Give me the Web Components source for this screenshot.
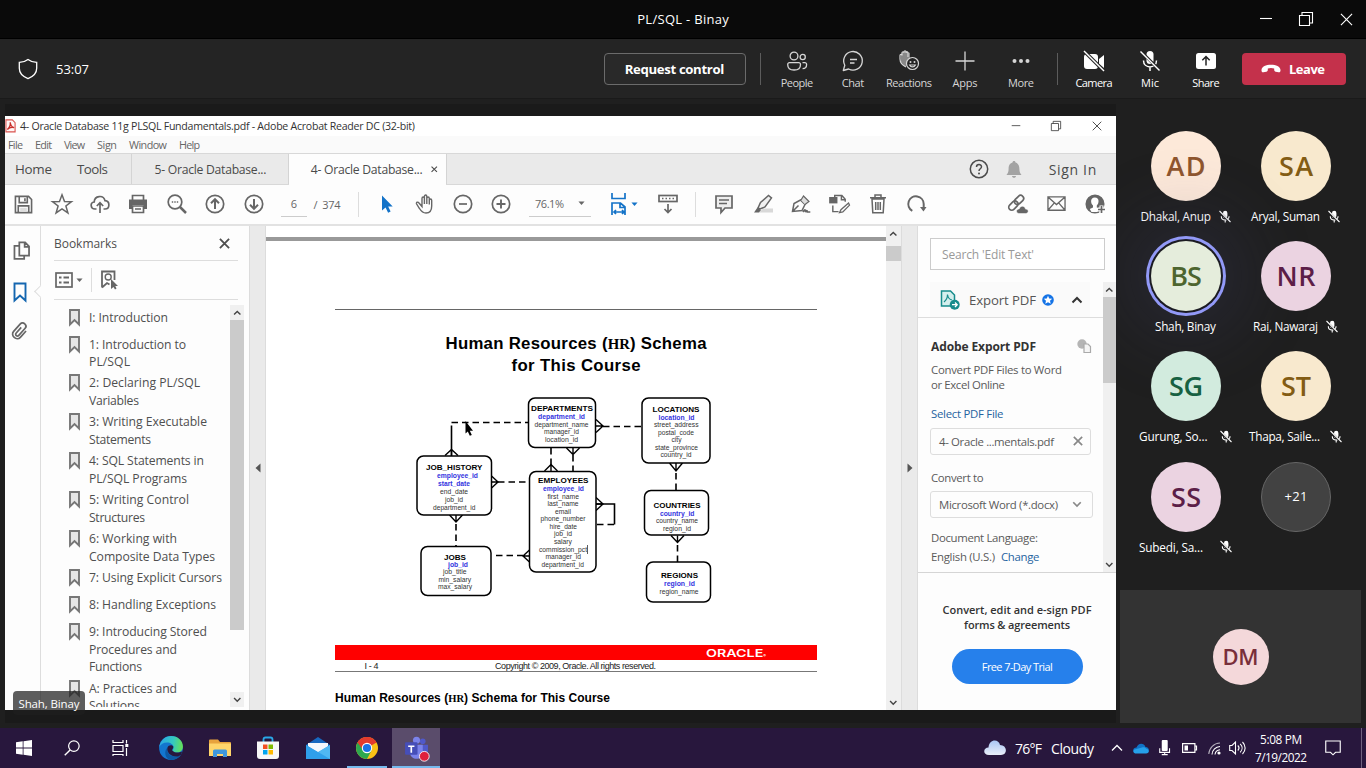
<!DOCTYPE html>
<html lang="en">
<head>
<meta charset="utf-8">
<title>PL/SQL - Binay</title>
<style>
html,body{margin:0;height:100%;overflow:hidden;background:#1f1f1f}
body{font-family:"Open Sans","Noto Sans",sans-serif}
</style>
</head>
<body>
<meeting-app></meeting-app>
<script>
/* ---------- icons: [viewBox width, height, markup] ---------- */
const ICONS = {
  min:[14,14,'<path d="M1 6.500h12" stroke-width="1.100"/>'],
  restore:[14,14,'<path d="M.5 3.500h10v10h-10zM3 3.500V.5h10.500v10.500H11" stroke-width="1.100"/>'],
  close:[14,14,'<path d="M1 1l12 12M13 1L1 13" stroke-width="1.200"/>'],
  shield:[20,22,'<path d="M10 1.500C7.500 3.500 4.500 4.200 1.300 4.300v6c0 5 3.500 8.300 8.700 10.300 5.200-2 8.700-5.300 8.700-10.300v-6C15.500 4.200 12.500 3.500 10 1.500z" stroke-width="1.300"/>'],
  people:[22,22,'<g stroke-width="1.300"><circle cx="8" cy="6" r="3.900"/><circle cx="16.700" cy="7" r="2.600"/><path d="M3.500 12.600h9.200a1.800 1.800 0 0 1 1.800 1.800c0 3.700-2.500 5.600-6.400 5.600S1.700 18 1.700 14.400a1.800 1.800 0 0 1 1.800-1.800zM16.500 12.600h2.300a1.800 1.800 0 0 1 1.800 1.800c0 2.700-1.500 4.200-4 4.300"/></g>'],
  chat:[22,22,'<g stroke-width="1.300"><path d="M1.300 20.500l1.500-5.300A9.300 9.300 0 1 1 6.600 19z" stroke-linejoin="round"/><path d="M8 9.500h7M8 13h4.500"/></g>'],
  react:[22,22,'<path d="M3 4v8l4 5 4-3 3-4-2-1V3l-2-1-1-1-2 1-2 1z" fill="#888" stroke="none"/><g stroke-width="1.200"><path d="M8 17C4 15 2 12 2 9V5.500c0-1.500 2-1.500 2 0V3c0-1.500 2-1.500 2 0V2c0-1.500 2-1.500 2 0v1c0-1.500 2-1.500 2 0v4"/><circle cx="14.500" cy="13.500" r="6" fill="#242424"/><path d="M11.600 15c1.200 2.600 4.600 2.600 5.800 0z"/></g><circle cx="12.500" cy="12" r="1" fill="currentColor" stroke="none"/><circle cx="16.500" cy="12" r="1" fill="currentColor" stroke="none"/>'],
  plus:[22,22,'<path d="M11 1.500v19M1.500 11h19" stroke-width="1.300"/>'],
  more:[22,22,'<g fill="currentColor" stroke="none"><circle cx="4.500" cy="11" r="2"/><circle cx="11" cy="11" r="2"/><circle cx="17.500" cy="11" r="2"/></g>'],
  camera:[22,22,'<g fill="currentColor" stroke="none"><rect x="1" y="4" width="14" height="15" rx="3"/><path d="M16 9l5-4v13l-5-4z"/></g><path d="M2 2l19 19" stroke="#242424" stroke-width="3.500"/><path d="M1 1l20 20" stroke-width="1.500"/>'],
  mic:[22,22,'<rect x="7.500" y="1" width="7" height="13" rx="3.500" fill="currentColor" stroke="none"/><path d="M4.500 10.500c0 8.500 13 8.500 13 0M11 17v4" stroke-width="1.500"/><path d="M3 2.500l17 17" stroke="#242424" stroke-width="3"/><path d="M1.500 1.500l19 19" stroke-width="1.500"/>'],
  share:[22,22,'<rect x="1" y="3" width="20" height="16" rx="2.500" fill="currentColor" stroke="none"/><path d="M11 15.500V7M7.300 10.300L11 6.600l3.700 3.700" stroke="#242424" stroke-width="1.500"/>'],
  hang:[20,10,'<path d="M10 .8c5 0 9.300 1.800 9.500 5.200.1 1.600-.5 2.600-2 2.300l-2.800-.6c-1-.2-1.500-.9-1.500-2V4.600a10 10 0 0 0-6.400 0v1.100c0 1.100-.5 1.800-1.500 2l-2.800.6C1 8.600.4 7.600.5 6 .7 2.600 5 .8 10 .8z" fill="currentColor" stroke="none"/>'],
  pdf:[12,15,'<path d="M1 1h7l3 3v10H1z" stroke="#d9534f" stroke-width="1.200" fill="#fff6f5"/><path d="M2.500 11.500C5 9.500 6 6 5.700 3.500 6 7 8 9 10 9.500 7.500 8.700 4.500 9.500 2.500 11.500z" stroke="#c9302c" stroke-width="1.400"/>'],
  help:[20,20,'<circle cx="10" cy="10" r="8.700" stroke-width="1.500"/><path d="M7.500 8c0-3.200 5-3.200 5-.2 0 2-2.500 2-2.500 4.200" stroke-width="1.500"/><circle cx="10" cy="14.500" r="1" fill="currentColor" stroke="none"/>'],
  bell:[16,19,'<path d="M8 1c1 0 1.500.6 1.500 1.500C12.500 3.300 13.400 6 13.400 9c0 3 .8 4.500 2.100 6H.5C1.800 13.500 2.600 12 2.600 9c0-3 .9-5.700 3.900-6.500C6.500 1.600 7 1 8 1zM6 16h4c0 2.400-4 2.400-4 0z" fill="#a3a3a3" stroke="none"/>'],
  save:[20,20,'<path d="M1.500 1.500h13.800l3.200 3.200v13.800h-17z"/><path d="M5.500 2v6h8.500V2M4.500 18v-6.500h11V18"/><path d="M11.500 3.500v3"/><path d="M6.500 13.500h7v4h-7z" fill="#ddd" stroke="none"/>'],
  star:[22,22,'<path d="M11 1.800l2.500 6.700 7 .2-5.600 4.300 2 6.900L11 15.800 5.100 19.900l2-6.900L1.500 8.700l7-.2z" stroke-width="1.500"/>'],
  upcloud:[20,20,'<path d="M6.500 15H5C.3 15-.2 8.600 4.200 8 4.500 1.400 13.500.6 15 6.600c5.300.4 5 8.400 0 8.400h-1.500M10 19V9M6.800 12l3.200-3.300L13.200 12"/>'],
  print:[20,20,'<path d="M4.500 6V1.500h11V6M4.500 12h11v6.500h-11zM7 15h6"/><path d="M1 5.500h18V15h-3.500v-4h-11v4H1z" fill="currentColor" stroke="none"/>'],
  search:[20,20,'<circle cx="8" cy="8" r="6.800"/><path d="M13 13l6 6" stroke-width="2.500"/><path d="M4.800 8h1.400M7.300 8h1.400M9.800 8h1.400"/>'],
  up:[20,20,'<circle cx="10" cy="10" r="8.700"/><path d="M10 15V5.500M6 9.200l4-4 4 4" stroke-width="2"/>'],
  down:[20,20,'<circle cx="10" cy="10" r="8.700"/><path d="M10 5v9.500M6 10.800l4 4 4-4" stroke-width="2"/>'],
  cursor:[12,18,'<path d="M1 .5v15l3.600-3 2.500 5.300 2.500-1.200L7.200 11.500H11.700z" fill="#1473c8" stroke="none"/>'],
  hand:[20,20,'<path d="M7 11V4.500c0-2 2.400-2 2.400 0V2.500c0-2 2.400-2 2.400 0v2c0-2 2.500-2 2.500 0v2c0-2 2.400-2 2.400 0V12c0 4-2 7-5.700 7-3.500 0-4.700-1.500-6.500-4.500L1.500 9.800C1 8 3 7.600 4 9l3 3.500V4.500M9.400 4v6M11.800 4v6M14.300 6v4.500" stroke-width="1.400"/>'],
  minus:[20,20,'<circle cx="10" cy="10" r="8.700"/><path d="M6 10h8"/>'],
  cplus:[20,20,'<circle cx="10" cy="10" r="8.700"/><path d="M5.500 10h9M10 5.500v9" stroke-width="1.900"/>'],
  caret:[8,5,'<path d="M.5.500h7L4 4.500z" fill="currentColor" stroke="none"/>'],
  fit:[18,22,'<path d="M2 0v5.500h13V0M2 22v-12h8.500l4.500 4v8M10 10.500v4h4.500M4 19h10M6 17l-2 2 2 2M12 17l2 2-2 2" stroke="#1473c8"/>'],
  keys:[20,20,'<rect x="1" y="1.500" width="18" height="6"/><path d="M4 4.500h1.500M7.500 4.500H9M11 4.500h1.500M14.500 4.500H16M10 10v8M6.500 15L10 18.500 13.500 15"/>'],
  comment:[20,20,'<path d="M2 2h16v12h-7l-4 4.500V14H2z" fill="#eee"/><path d="M5 6h10M5 9.500h8"/>'],
  marker:[20,20,'<path d="M6 18.500h14v-4H10z" fill="#d8d8d8" stroke="none"/><path d="M5 14L7.500 8.500 15.500 1.500l3 2.500L12 13l-5 2z" stroke-width="1.500" fill="#f0f0f0"/><path d="M1 18.500l3.500-5 3.500 2.500-2 2.500z" fill="currentColor" stroke="none"/>'],
  pen:[20,20,'<path d="M1.500 17.500L3 9.500l6.500-3.500 4.500 4.500-3 6zM1.500 17.500l6-6" stroke-width="1.500"/><path d="M10 6l2.500-4L18 7.500l-4 3" stroke-width="1.200" fill="#ddd"/><path d="M12 18c1.500-3 2.500-3 2.300 0 1.200-2 2-2 2 0h3"/>'],
  convert:[22,20,'<rect x="1" y="4" width="7" height="5" fill="currentColor"/><path d="M6 4V1.500h7.500l3.500 4V8M13 2v4h4M4 12v6.500h6" stroke-width="1.500"/><path d="M20.500 9.500l-8 7-1.500 3 3.500-.8 7-7z" stroke-width="1.300"/>'],
  trash:[18,20,'<path d="M3 5h12l-.8 13.700H3.800zM1 3.800h16M6 3.500V1h6v2.500M6.700 8v8M9 8v8M11.300 8v8" stroke-width="1.500"/>'],
  rotate:[20,20,'<path d="M6.300 16.800A7.700 7.700 0 1 1 17.700 10v5" stroke-width="2"/><path d="M14 13h6.500l-3 4.500z" fill="currentColor" stroke="none"/>'],
  link:[22,20,'<g transform="rotate(-45 9 9)" stroke-width="1.700"><rect x="0" y="6" width="10.500" height="6" rx="3"/><rect x="8" y="6" width="10.500" height="6" rx="3"/></g><path d="M12 19.500c-3.500-.2-3-4.800.2-4.600 1-3.600 5.800-3.300 6.300.2 3.700 0 3.500 4.400 0 4.400z" fill="currentColor" stroke="#fff" stroke-width=".5"/>'],
  mail:[20,16,'<path d="M1 1h18v14H1zM1 1l9 8 9-8M1 15l6.500-7.500M19 15l-6.500-7.500" stroke-width="1.400"/>'],
  user:[21,20,'<circle cx="10" cy="10" r="8.700" fill="currentColor"/><path d="M9.800 3.500c5 0 4.300 6 2 8v2l3 1.500-2.500 3H6.500L4.800 15 8 13.500v-2c-2.500-2-3-8 1.800-8z" fill="#fff" stroke="none"/><path d="M16.500 11.500v8M12.500 15.500h8" stroke="#fff" stroke-width="4"/><path d="M16.500 12v7M13 15.500h7" stroke-width="1.700"/>'],
  pages:[18,20,'<path d="M6.500 1.500h6l4 4v9.500h-10zM12 2v4h4M6 5H1.500v13.500h10V15" stroke-width="1.800"/>'],
  bm:[14,20,'<path d="M1.500 1.500h11v17L7 13.500l-5.500 5z" stroke="#1466b0" stroke-width="1.900"/>'],
  clip:[18,20,'<g transform="rotate(42 9 10)" stroke-width="1.700"><path d="M13.500 6v8.500c0 5.500-9 5.500-9 0V4.500c0-4 6.500-4 6.500 0v9.500c0 2.500-3.500 2.500-3.500 0V6.500"/></g>'],
  opts:[18,16,'<rect x="1" y="1" width="16" height="14" stroke-width="1.700"/><path d="M4 5.500h2.500M8.500 5.500H14M4 10.500h2.500M8.500 10.500H14" stroke-width="2"/>'],
  findbm:[19,20,'<path d="M2 17.500V1.500h12.500V10M2 17.500l5-4.500 2.500 1.500" stroke-width="1.800"/><circle cx="8.200" cy="7" r="3" stroke-width="1.400"/><path d="M11 9v10l2.500-2 1.500 2.500 1.500-1-1.200-2.500H18z" fill="currentColor" stroke="none"/>'],
  bmi:[11,17,'<path d="M1 1h9v14.500L5.500 11 1 15.500z" stroke="#777" stroke-width="1.900" fill="#e6e6e6"/>'],
  x:[12,12,'<path d="M1 1l10 10M11 1L1 11" stroke-width="2"/>'],
  chevU:[12,8,'<path d="M1.500 6.500L6 2l4.500 4.500" stroke-width="2"/>'],
  chevT:[12,8,'<path d="M1 6.500L6 1.500l5 5" stroke-width="1.300"/>'],
  chevD:[12,8,'<path d="M1.500 1.500L6 6l4.500-4.500" stroke-width="2"/>'],
  triL:[6,10,'<path d="M5.500.5v9L.5 5z" fill="currentColor" stroke="none"/>'],
  triR:[6,10,'<path d="M.5.5v9L5.500 5z" fill="currentColor" stroke="none"/>'],
  exp:[20,20,'<path d="M1.500 1h9l4 4v8.500l-4 2.500h-9z" stroke="#178c8c" stroke-width="1.500" fill="#d4efed"/><path d="M4 12c2.500-2 3.500-5 3.500-7.500C8 8 9.500 9.500 12 10" stroke="#178c8c" stroke-width="1.200"/><circle cx="14.700" cy="14.700" r="5" fill="#178c8c" stroke="none"/><path d="M12 14.700h5M15 12.500l2.200 2.200L15 17" stroke="#fff" stroke-width="1.300"/>'],
  badge:[12,12,'<circle cx="6" cy="6" r="5.800" fill="#1473e6" stroke="none"/><path d="M6 1.800l1.200 2.800 3 .2L8 6.800l.7 3L6 8.200 3.300 9.800l.7-3-2.200-2 3-.2z" fill="#fff" stroke="none"/>'],
  copy:[14,14,'<circle cx="5" cy="5" r="4.700" fill="#b5b5b5" stroke="none"/><path d="M7 5h4l2.500 2.500v6H7z" fill="#f5f5f5" stroke="#aaa" stroke-width="1.200"/>'],
  smic:[12,13,'<rect x="4" y=".8" width="4.400" height="7.500" rx="2.200" fill="currentColor" stroke="none"/><path d="M2.300 6.300c0 5 7.800 5 7.800 0M6.200 10v2.500" stroke-width="1.100"/><path d="M1 2l10.500 10.500" stroke="#1f1f1f" stroke-width="2"/><path d="M.5 1l11 11" stroke-width="1.100"/>'],
  win:[16,16,'<path d="M0 2.300L6.700 1.300V7.600H0zM7.500 1.200L16 0v7.600H7.500zM0 8.400h6.700v6.300L0 13.700zM7.500 8.400H16V16l-8.500-1.200z" fill="#fff" stroke="none"/>'],
  tsearch:[17,17,'<circle cx="10.500" cy="6.500" r="5.600" stroke-width="1.300"/><path d="M6.500 10.500L.8 16.200" stroke-width="1.500"/>'],
  task:[17,16,'<path d="M1 0v2.500h10V0M1 5.500h10v6H1zM1 16v-1.500h10V16M14.500 0v3.500M14.500 8v8" stroke-width="1.200"/><rect x="13.300" y="4" width="3" height="3" fill="#fff" stroke="none"/>'],
  edge:[24,24,'<defs><linearGradient id="a" x1="0" y1=".2" x2="1" y2=".3"><stop stop-color="#2aa5e8"/><stop offset=".6" stop-color="#35c8c0"/><stop offset="1" stop-color="#64df58"/></linearGradient></defs><g stroke="none"><circle cx="12" cy="12" r="11.900" fill="#1376cf"/><path d="M.2 11C1.500 4 6.500.100 12 .100c7 0 12 5 11.900 10.500 0 4-3 6-6 6-2.500 0-4.500-.8-4.500-1.800 0-.8 1.200-1.300 1.200-3.300C14.500 8.500 11.500 6.500 8 6.500 4.500 6.500 1.500 8.500.2 11z" fill="url(#a)"/><path d="M8.500 11.500c-1.500 5 3 9.500 8.500 9 2.500-.2 4-1 5-1.800-2 3.200-6 5.300-10 5.200C6 23.500 4.500 15 8.500 11.500z" fill="#0c59a4"/><path d="M13.500 14.700c-1.300-.9.800-1.600.8-4.200-1.500-2-5-1.300-5.800 1-1.300 4.500 3 9 8.500 9 2.500 0 4.200-1 5-1.800 1-1.200 1.200-3.200.4-3.200-2 1.500-6.500 1.700-8.900-.8z" fill="#28173d"/></g>'],
  folder:[22,18,'<g stroke="none"><path d="M0 1.500Q0 .5 1 .5h8l2 2.500h10q1 0 1 1V17H0z" fill="#e8a33d"/><path d="M0 4.500h22V17H0z" fill="#ffd56b"/><path d="M4 18v-6q0-1.500 1.500-1.500h11Q18 10.500 18 12v6h-4v-3H8v3z" fill="#3f97dc"/></g>'],
  store:[24,24,'<path d="M7.500 6V3.500q0-2 2-2h5q2 0 2 2V6" stroke="#29a8e8" stroke-width="1.800"/><path d="M1 5.500h22v14.500q0 3-3 3H4q-3 0-3-3z" fill="#f7f7f7" stroke="none"/><g stroke="none"><path d="M7 8.500h4.500V13H7z" fill="#f25022"/><path d="M12.500 8.500H17V13h-4.500z" fill="#7fba00"/><path d="M7 14h4.500v4.500H7z" fill="#00a4ef"/><path d="M12.500 14H17v4.500h-4.500z" fill="#ffb900"/></g>'],
  tmail:[24,22,'<g stroke="none"><path d="M0 8L12 0l12 8v14H0z" fill="#1769c0"/><path d="M2 6h20v9H2z" fill="#f4f8fc"/><path d="M0 8l12 7.500L24 8v14H0z" fill="#2390e0"/><path d="M24 8v14H0z" fill="#50b7f2"/><path d="M0 8v14h24z" fill="#2f9fea"/></g>'],
  chrome:[22,22,'<g stroke="none"><circle cx="11" cy="11" r="11" fill="#fbc116"/><path d="M1.500 5.500A11 11 0 0 1 20.500 5.500L11 11z" fill="#e33b2e"/><path d="M1.500 5.500A11 11 0 0 0 11 22l4.500-8.500L11 11z" fill="#2da94f"/><path d="M1.500 5.500A11 11 0 0 1 20.500 5.700H11L7 13z" fill="#e33b2e"/><circle cx="11" cy="11" r="5.200" fill="#fff"/><circle cx="11" cy="11" r="4.100" fill="#1a73e8"/></g>'],
  teams:[24,24,'<g stroke="none"><circle cx="18" cy="5" r="2.700" fill="#5059c9"/><circle cx="12" cy="4" r="3.400" fill="#7b83eb"/><path d="M14 8.500h9v6.500c0 5-6 6-9 3z" fill="#5059c9"/><path d="M6 8.500h12v8c0 7-12 7-12 0z" fill="#7b83eb"/><rect x="1" y="6" width="12" height="12" rx="1" fill="#464eb8"/><path d="M4 9h6v1.500H7.800V16H6.200v-5.500H4z" fill="#fff"/><circle cx="19.500" cy="19.500" r="4.700" fill="#e0203c" stroke="#fff" stroke-width=".8"/></g>'],
  cloud:[22,16,'<defs><linearGradient id="c" x1="0" y1="0" x2="0" y2="1"><stop stop-color="#a9c6f5"/><stop offset="1" stop-color="#e9eef8"/></linearGradient></defs><path d="M5 15C-1.500 15-1 7.500 4.500 7.500 5-1.500 15-1.500 16 5c7.500 0 8 10 1 10z" fill="url(#c)" stroke="none"/>'],
  onedrive:[16,11,'<g stroke="none"><path d="M3 10C-1 9.500-.5 4.500 3.500 4.500 5-.5 11-.5 12.500 4 17 4.300 17 10 13 10z" fill="#1072c6"/><path d="M3 10.500C.5 10.500-.5 8 1.500 6.500L9 4.500c2-.8 3.500 0 4 1 3.500.8 3.800 5 0 5z" fill="#26a0ea"/></g>'],
  tmic:[12,17,'<rect x="3" y="0" width="6.500" height="12" rx="1" fill="#fff" stroke="none"/><path d="M.8 9v4.500h10.700V9M6.200 13.500v2.500M3 16h6.500" stroke-width="1.200"/>'],
  batt:[15,10,'<path d="M.6.600h12.300v8.800H.6zM13 3h1.500v4H13" stroke-width="1.200"/><rect x="2.500" y="2.500" width="3.500" height="5" fill="#fff" stroke="none"/>'],
  wifi:[13,13,'<g stroke-width="1.100"><path d="M.8 12A11.500 11.500 0 0 1 12 1" opacity=".65"/><path d="M4 12.500A8.500 8.500 0 0 1 12 4.500"/><path d="M7 12.500A5.500 5.500 0 0 1 12 7.800"/></g><circle cx="11" cy="11" r="1.600" fill="#fff" stroke="none"/>'],
  vol:[17,14,'<path d="M.7 4.500H3L6.500 1v12L3 9.500H.700zM8.800 4.500c1.500 1.500 1.500 3.500 0 5M11.200 2.800c2.500 2.500 2.500 6 0 8.500M13.500 1c3.500 3.500 3.500 8.500 0 12" stroke-width="1.100"/>'],
  note:[17,17,'<path d="M.8 1h15.400v12h-5L8.500 15.700 5.800 13h-5z" stroke-width="1.200"/>']
};
const def = (n, html, fn) => customElements.define(n, class extends HTMLElement {
  connectedCallback(){
    if (this.shadowRoot) return;
    this.attachShadow({mode:'open'}).innerHTML = typeof html === 'function' ? html(this) : html;
    if (fn) fn(this);
  }
});
/* Lay items [start, size, markup] along a flex axis; the space between becomes margin */
const along = (dir, origin, items) => {
  let at = origin;
  return items.map(([s, w, m, extra]) => {
    const gap = s - at; at = s + w;
    return dir === 'x'
      ? `<div class="c" style="margin-left:${gap}px;width:${w}px;${extra||''}">${m}</div>`
      : `<div class="r" style="margin-top:${gap}px;height:${w}px;${extra||''}">${m}</div>`;
  }).join('');
};
const T = (w, s, extra='') => `<fit-text w="${w}" style="${extra}">${s}</fit-text>`;
const I = (n, w, extra='') => `<svg-icon name="${n}" w="${w}" style="${extra}"></svg-icon>`;
const BASE = `:host,*{box-sizing:border-box}.c{flex:none;display:flex;align-items:center;justify-content:center;align-self:stretch}.r{flex:none;display:flex;align-items:center}`;

def('svg-icon', el => {
  const [w,h,m] = ICONS[el.getAttribute('name')], W = +el.getAttribute('w') || w;
  return `<style>:host{display:block;flex:none;width:${W}px;height:${W*h/w}px}svg{display:block;overflow:visible}</style><svg width="${W}" height="${W*h/w}" viewBox="0 0 ${w} ${h}" fill="none" stroke="currentColor" stroke-width="1.700">${m}</svg>`;
});

def('title-bar', `<style>${BASE}:host{display:flex;height:39px;background:#0a0a0a;border-bottom:1px solid #000;color:#fff;font-size:13px}</style>` +
  along('x',0,[[637,92,T(91.5,'PL/SQL - Binay')],[1259,14,I('min',14)],[1299,14,I('restore',14)],[1339,14,I('close',13)]]));

def('call-action', el => `<style>:host{display:flex;flex-direction:column;align-items:center;width:56px;height:60px;padding-top:11px;box-sizing:border-box;font-size:11px;color:${el.hasAttribute('on')?'#fff':'#d6d6d6'}}.l{height:22px;display:flex;align-items:center}</style>${I(el.getAttribute('icon'),22)}<div class="l">${T(el.getAttribute('tw'),el.getAttribute('label'))}</div>`);

const act = (i,l,w,on) => `<call-action icon="${i}" label="${l}" tw="${w}" ${on?'on':''}></call-action>`;
def('call-toolbar', `<style>${BASE}:host{display:flex;height:60px;background:#242424;color:#fff;border-bottom:1px solid #1a1a1a}
.req{width:142px;height:32px;border:1px solid #6b6b6b;border-radius:4px;display:flex;align-items:center;justify-content:center;font-size:13.200px;font-weight:700;background:#292929;padding-right:1px}
.v{width:1px;height:32px;background:#5c5c5c}.leave{width:104px;height:32px;border-radius:4px;background:#c4314b;display:flex;align-items:center;padding-left:19px;gap:8px;font-size:13px;font-weight:700}</style>` +
  along('x',0,[[18,20,I('shield',20)],[56,33,T(33,'53:07'),'font-size:13px'],[604,142,`<div class="req">${T(99.5,'Request control')}</div>`],[760,1,'<div class="v"></div>'],
  [769,56,act('people','People',32.5)],[825,56,act('chat','Chat',22.5)],[881,56,act('react','Reactions',46)],[937,56,act('plus','Apps',25)],[993,56,act('more','More',26)],
  [1057,1,'<div class="v"></div>'],[1066,56,act('camera','Camera',37,1)],[1122,56,act('mic','Mic',18,1)],[1178,56,act('share','Share',27.5,1)],
  [1242,104,`<div class="leave">${I('hang',20)}${T(36,'Leave')}</div>`]]));

def('reader-header', `<style>${BASE}:host{display:block;color:#5a5a5a}
.t,.m,.tabs,.tools{display:flex}.t{height:20px;background:#fff;color:#333;font-size:10.600px}.m{height:18px;background:#fafafa;border-bottom:1px solid #d8d8d8;font-size:10.800px;color:#666}
.tabs{height:31px;background:#eaeaea;border-bottom:1px solid #d8d8d8;font-size:12.200px;color:#4b4b4b}.tools{height:41px;background:#fdfdfd;border-bottom:2px solid #e2e2e2;font-size:11px;color:#666;padding-bottom:1px}
.d{align-self:stretch;width:1px;background:#d4d4d4}.v{width:1px;height:25px;background:#ddd}.f{border-bottom:1px solid #ccc;height:25px;display:flex;align-items:center;justify-content:center;width:100%}</style>
<div class="t">${along('x',5,[[5,11,I('pdf',11)],[20,395,T(395,'4- Oracle Database 11g PLSQL Fundamentals.pdf - Adobe Acrobat Reader DC (32-bit)')],[1011,10,I('min',10)],[1051,10,I('restore',10)],[1092,10,I('close',10)]])}</div>
<div class="m">${along('x',5,[[8,15,T(15,'File')],[35,17,T(17,'Edit')],[64,21,T(21,'View')],[97,20,T(20,'Sign')],[129,38,T(38,'Window')],[179,21,T(21,'Help')]])}</div>
<div class="tabs">${along('x',5,[[15,37,T(37,'Home'),'font-size:13.400px'],[77,31,T(31,'Tools'),'font-size:13.400px'],[131,1,'<div class="d"></div>'],[154.5,112,T(112,'5- Oracle Database...')],[288,1,'<div class="d"></div>'],[289,157,T(112,'4- Oracle Database...')+I('x',6.5,'margin-left:8px'),'background:#fdfdfd;padding-left:13px;height:31px'],[446,1,'<div class="d"></div>'],[968.500,20,I('help',20)],[1006,16,I('bell',16)],[1048.500,48,T(47.5,'Sign In'),'font-size:14px']])}</div>
<div class="tools">${along('x',5,[[14,19,I('save',19)],[51,22,I('star',22)],[90,20,I('upcloud',20)],[128,20,I('print',20)],[167,20,I('search',20)],[205,20,I('up',20)],[244,20,I('down',20)],
[281,26,'<div class="f">6</div>'],[313,28,T(27,'/&nbsp; 374')],[358,1,'<div class="v"></div>'],[381,12,I('cursor',12)],[415,20,I('hand',20)],[453,20,I('minus',20)],[491,20,I('cplus',20)],
[529,62,`<div class="f">${T(29,'76.1%')+I('caret',7,'margin-left:14px')}</div>`],[610,18,I('fit',18)],[631,7,I('caret',7),'color:#1473c8'],[658,20,I('keys',20)],[695,1,'<div class="v"></div>'],[714,20,I('comment',20)],[752,21,I('marker',20)],[790,21,I('pen',20)],[828,22,I('convert',21)],[869,18,I('trash',18)],[905,21,I('rotate',20)],[1007,22,I('link',22)],[1047,19,I('mail',19)],[1085,21,I('user',21)]])}</div>`);

def('scroll-bar', el => {
  const h=+el.getAttribute('h'), s=+el.getAttribute('size'), a=+el.getAttribute('from');
  return `<style>:host{display:flex;flex-direction:column;justify-content:space-between;flex:none;width:${el.getAttribute('w')}px;height:${h}px;background:${el.getAttribute('bg')||'#f0f0f0'};color:#444}.e{height:15px;display:flex;align-items:center;justify-content:center;background:#f0f0f0}.m{flex:1}.m div{margin-top:${a}px;height:${s}px;background:#cbcbcb}</style><div class="e">${I('chevU',8.5)}</div><div class="m"><div></div></div><div class="e">${I('chevD',8.5)}</div>`;
});

def('side-rail', `<style>${BASE}:host{display:flex;flex-direction:column;width:36px;background:#fdfdfd;border-right:1px solid #ddd;color:#666;position:relative}.r{padding-left:6px}
.n{position:absolute;right:-5px;top:61px;width:9px;height:9px;transform:rotate(45deg);background:#fdfdfd;border:solid #ddd;border-width:0 0 1px 1px}</style><div class="n"></div>` +
 along('y',226,[[241,20,I('pages',17.5),'padding-left:8px'],[282,20,I('bm',14),'padding-left:8px'],[321,20,I('clip',18)]]));

def('bookmark-item', `<style>:host{display:flex;gap:9px;min-height:27px;padding-bottom:4.400px;box-sizing:border-box;font-size:12.200px;line-height:17.300px;color:#4f4f4f}.t{white-space:nowrap}</style>${I('bmi',11)}<div class="t"><slot></slot></div>`);

const BM=[[['I: Introduction',79]],[['1: Introduction to',97],['PL/SQL',41]],[['2: Declaring PL/SQL',111],['Variables',50]],[['3: Writing Executable',118],['Statements',62]],[['4: SQL Statements in',115],['PL/SQL Programs',98]],[['5: Writing Control',100],['Structures',56]],[['6: Working with',88],['Composite Data Types',126]],[['7: Using Explicit Cursors',133]],[['8: Handling Exceptions',127]],[['9: Introducing Stored',118],['Procedures and',88],['Functions',53]],[['A: Practices and',88],['Solutions',51]]];
def('bookmark-panel', `<style>${BASE}:host{display:flex;flex-direction:column;width:208px;background:#fdfdfd;color:#4f4f4f;font-size:12px}
.h{height:35px;margin:0 11px 0 13px;display:flex;align-items:center;justify-content:space-between;border-bottom:1px solid #ddd;padding:0 8px 0 0}
.o{height:39px;margin:0 11px 0 13px;display:flex;border-bottom:1px solid #ddd;color:#666}.v{width:1px;height:24px;background:#ddd}
.b{display:flex;margin-top:5px;height:402px;overflow:hidden}.l{width:189px;padding:3.500px 0 0 28px}</style>
<div class="h">${T(63,'Bookmarks')+I('x',11)}</div><div class="o">${along('x',54,[[55,18,I('opts',18)],[76,7,I('caret',7)],[91,1,'<div class="v"></div>'],[100,18,I('findbm',19)]])}</div>
<div class="b"><div class="l">${BM.map(b=>`<bookmark-item>${b.map(([s,w])=>`<div style="height:17.300px">${T(w,s)}</div>`).join('')}</bookmark-item>`).join('')}</div><scroll-bar w="14" h="402" from="0" size="310" bg="transparent"></scroll-bar></div>`);

def('fold-strip', el=>`<style>:host{display:flex;width:${el.getAttribute('w')}px;flex:none;box-sizing:border-box;background:#eaeaea;border:solid #dcdcdc;border-width:0 1px;align-items:center;justify-content:center;color:#555}</style>${I(el.getAttribute('icon'),6)}`);

/* Schema diagram: box [x,y,w,h], then rows [text, left, width, centre y] */
const ENT=[
 [[528.5,398,67,49.500],['DEPARTMENTS',531,62,408],['department_id',538,47,416.5],['department_name',534.5,54,424.5],['manager_id',544,35,432],['location_id',545,33,439.5]],
 [[642,398,68,65],['LOCATIONS',652.5,47,409],['location_id',658.5,36,417.5],['street_address',654,44.5,425],['postal_code',658,36,432.5],['city',671.5,10,440],['state_province',655,43,447.5],['country_id',660.5,31,455]],
 [[644.5,490.5,64,44.5],['COUNTRIES',653.5,47,505],['country_id',660,34.5,513.5],['country_name',656,42,521],['region_id',663,28,528.5]],
 [[646.5,562,64,40],['REGIONS',661,37,575],['region_id',664,31,583.5],['region_name',659.5,39,591.5]],
 [[529.5,471.5,66.5,100.5],['EMPLOYEES',538,50.5,480],['employee_id',543,41,489],['first_name',547.5,31.5,496.5],['last_name',547.5,31,504],['email',555,16,511.5],['phone_number',540.5,45,519],['hire_date',549.5,27.5,526.5],['job_id',554,18,534],['salary',554,18,541.5],['commission_pct',539,48,549.5],['manager_id',545.5,35.5,557],['department_id',541.5,42.5,564.5]],
 [[417,456,74.5,59],['JOB_HISTORY',426,56.5,467],['employee_id',437,41,475.5],['start_date',438,32,483.5,1],['end_date',440,28,492],['job_id',445,18,500],['department_id',433,42.5,508]],
 [[421,546.5,70,49],['JOBS',444,22,557],['job_id',448,20,564.5],['job_title',443,23.5,571.5],['min_salary',438.5,32.5,579.5],['max_salary',438,34,587]]];
const foot=(x,y,dx,dy)=> dx ? `M${x+dx} ${y-6.500}L${x} ${y}L${x+dx} ${y+6.500}M${x} ${y}h${dx}` : `M${x-6.500} ${y+dy}L${x} ${y}L${x+6.500} ${y+dy}M${x} ${y}v${dy}`;
def('schema-diagram', `<style>:host{display:block;height:222px}svg{display:block}text{font-family:"Liberation Sans",Arial,sans-serif}</style>
<svg width="482" height="222" viewBox="335 390 482 222"><g fill="none" stroke="#000" stroke-width="1.600">
<path d="M451.500 425.500V456M596 504H614.500V524.500"/>
<path d="${foot(451.5,449.5,0,6)}${foot(498,482,-7,0)}${foot(551,464.5,0,6.5)}${foot(573,454.5,0,-6.5)}${foot(603,426,-7,0)}${foot(676,471,0,-8)}${foot(677.5,542.5,0,-7)}${foot(456,522,0,-7)}${foot(523,556,7,0)}${foot(603,504,-7,0)}" stroke-width="1.400"/>
<path d="M451.500 422.500H528M498 482H529M551 448V465M573 455V471M603 426.500H642M676 473V490M677.500 545V562M456 524V546M496 555.500H523M614 524.500H597" stroke-dasharray="6.500 4"/></g>
${ENT.map(([b,...rows])=>`<rect x="${b[0]}" y="${b[1]}" width="${b[2]}" height="${b[3]}" rx="6.500" fill="#fff" stroke="#000" stroke-width="1.500"/>`+rows.map(([t,x,w,y,key],i)=>`<text x="${x}" y="${y+(i?2:2.7)}" textLength="${w}" lengthAdjust="spacingAndGlyphs" font-size="${i?7:8}" ${i<2||key?'font-weight="700"':''} fill="${i==1||key?'#3333e0':i?'#333':'#000'}">${t}</text>`).join('')).join('')}
<path d="M587.500 545v9" stroke="#333" stroke-width=".8"/>
<path d="M465.500 421v12.500l2.300-2 2 4.300 2-.8-2-4.300h3.200z"/></svg>`);

def('pdf-page', `<style>${BASE}:host{display:block;width:620px;height:484px;overflow:hidden;background:#fff;font-family:"Liberation Sans",Arial,sans-serif;color:#000;padding-top:11px}
.bar{height:4px;background:#999}.p{width:482px;margin:68px 0 0 69px;border-top:1px solid #666;padding-top:23px}
.h{height:22px;display:flex;align-items:center;justify-content:center;font-weight:700;font-size:16.800px}i{font-style:normal;font-family:"Liberation Serif",serif;font-size:.88em;letter-spacing:0}
.red{height:15px;background:#f00;margin-top:33px}.red svg{display:block;margin-left:371px}.f{display:flex;height:12px;border-bottom:1px solid #777;font-size:9px;color:#222;padding-top:1px}
.s{margin-top:19px;font-weight:700;font-size:12px;height:16px}</style>
<div class="bar"></div><div class="p"><div class="h">${T(261,'Human Resources (<i>HR</i>) Schema')}</div><div class="h">${T(129,'for This Course')}</div><schema-diagram style="margin-top:13px"></schema-diagram>
<div class="red"><svg width="62" height="15"><text x="0" y="11.500" textLength="60" lengthAdjust="spacingAndGlyphs" fill="#fff" font-weight="600" font-size="10.500" font-family="Inter,sans-serif">ORACLE<tspan font-size="3">®</tspan></text></svg></div>
<div class="f">${along('x',335,[[364,15,T(14,'I - 4')],[495,161,T(161,'Copyright © 2009, Oracle. All rights reserved.')]])}</div>
<div class="s">${T(275,'Human Resources (<i>HR</i>) Schema for This Course')}</div></div>`);

def('export-panel', `<style>${BASE}:host{display:flex;flex-direction:column;width:198px;background:#fdfdfd;color:#5a5a5a;font-size:11.400px}
.s{margin:12px 11px 0 12px;height:32px;border:1px solid #ccc;background:#fff;display:flex;align-items:center;padding:1px 0 0 11px;color:#999;font-size:12px}
.m{margin-top:12px;display:flex;height:291px;border-bottom:1px solid #d5d5d5}.l{width:185px}.e{display:flex;height:36px;border-bottom:1px solid #ddd;font-size:13.200px;color:#555;background:linear-gradient(90deg,#fdfdfd 12px,#fafafa 12px 172px,#fdfdfd 172px)}
.q{padding-left:13px}.box{border:1px solid #ddd;border-radius:3px;height:27px;width:161px;display:flex;align-items:center;margin-left:-1px;padding-left:8px;justify-content:space-between;padding-right:7px}b{font-weight:700;color:#333}a{color:#2563a0}
.up{display:flex;flex-direction:column;text-align:center}.up .r{justify-content:center;font-weight:600;color:#333;font-size:11px}.btn{width:131px;height:35px;border-radius:18px;background:#2680eb;color:#fff;display:flex;align-items:center;justify-content:center;font-weight:400;font-size:11px}</style>
<div class="s">${T(92,"Search 'Edit Text'")}</div>
<div class="m"><div class="l"><div class="e">${along('x',918,[[940,20,I('exp',20)],[969,67,T(67,'Export PDF')],[1042,12,I('badge',12)],[1071,12,I('chevU',12),'color:#333']])}</div>
<div class="q">${along('y',318,[[338,16,`<b>${T(105,'Adobe Export PDF')}</b>`+I('copy',14,'margin-left:41px'),'font-size:12px'],[362,15,T(131,'Convert PDF Files to Word')],[376.500,15,T(74,'or Excel Online')],[405.500,16,`<a>${T(72.5,'Select PDF File')}</a>`],[427.500,27,`<div class="box">${T(115,'4- Oracle ...mentals.pdf')+I('x',10,'color:#888')}</div>`],[469,16,T(52.5,'Convert to')],[491,27,`<div class="box" style="width:163px;padding-right:10px">${T(119,'Microsoft Word (*.docx)')+I('chevD',10,'color:#888')}</div>`],[529.500,16,T(107,'Document Language:')],[548,16,T(64,'English (U.S.)')+`<a style="margin-left:6px">${T(38.5,'Change')}</a>`]])}</div></div>
<scroll-bar w="13" h="290" from="0" size="86"></scroll-bar></div>
<div class="up">${along('y',573,[[602,14,T(149,'Convert, edit and e-sign PDF')],[617,14,T(106,'forms &amp; agreements')],[649,35,`<div class="btn">${T(71,'Free 7-Day Trial')}</div>`]])}</div>`);

def('reader-window', `<style>:host{display:block;width:1111px;height:594px;background:#fff;overflow:hidden;position:relative}.b{display:flex;height:484px}</style><reader-header></reader-header><div class="b"><side-rail></side-rail><bookmark-panel></bookmark-panel><fold-strip icon="triL" w="17"></fold-strip><pdf-page></pdf-page><scroll-bar w="15" h="484" from="5" size="15" ></scroll-bar><fold-strip icon="triR" w="17"></fold-strip><export-panel></export-panel></div>`);

def('shared-stage', `<style>:host{display:block;width:1111px;height:619px;margin:5px 0 0 5px;background:#1a1a1a;padding-top:12px;box-sizing:border-box;position:relative}
.n{position:absolute;left:8px;bottom:8px;width:72px;height:24px;border-radius:4px;background:rgba(30,30,30,.72);color:#fff;display:flex;align-items:center;justify-content:center;font-size:11.500px}</style><reader-window></reader-window><div class="n">${T(61,'Shah, Binay')}</div>`);

def('user-avatar', el=>{const d=+el.getAttribute('d')||70;return `<style>:host{display:flex;width:${d}px;height:${d}px;border-radius:50%;background:${el.getAttribute('bg')};color:${el.getAttribute('fg')};align-items:center;justify-content:center;font-weight:600;font-size:${d==70?27:22}px;line-height:1;box-sizing:border-box;flex:none;padding-bottom:1px}:host([talk]){box-shadow:0 0 0 2px #1b1b22,0 0 0 5px #9299f7,0 0 70px 30px rgba(70,70,120,.2)}:host([more]){border:1px solid #666;font-weight:400;font-size:13px}</style>${T(el.getAttribute('tw'),el.getAttribute('text'))}`});

def('participant-tile', el=>{const m=+el.getAttribute('mic');return `<style>:host{display:flex;flex-direction:column;align-items:center;width:110px;height:110.200px;color:#fff;font-size:11.800px}.n{display:flex;align-items:center;height:18px;margin-top:6px;align-self:flex-start;margin-left:${el.getAttribute('nx')}px}</style><slot></slot><div class="n">${el.getAttribute('name')?T(el.getAttribute('nw'),el.getAttribute('name')):''}${m?I('smic',12,`margin-left:${m}px`):''}</div>`});

const P=[['AD',39,'#fde9d9','#8f562e','Dhakal, Anup',70.5,9.5,8],['SA',34,'#f8e9ce','#835c14','Aryal, Suman',69,10,8],['BS',31.5,'#e5eddc','#4d652f','Shah, Binay',61,24,0,'talk'],['NR',39,'#ebd3e1','#5c1e48','Rai, Nawaraj',65,12,8],['SG',34,'#d2ebde','#176142','Gurung, So...',68.5,8,12.5],['ST',30,'#f8e9ce','#835c14','Thapa, Saile...',71,8,10],['SS',30,'#ebd3e1','#5c1e48','Subedi, Sa...',64,8,17],['+21',23,'#424242','#fff','',0,0,0,'more']];
def('participant-rail', `<style>:host{display:flex;flex-direction:column;width:250px;height:624px;overflow:hidden;box-sizing:border-box;padding-top:32px}.g{display:grid;grid-template-columns:110px 110px;margin-left:15px;height:459px;align-content:start}.me{width:241px;height:133px;background:#333;display:flex;align-items:center;justify-content:center;margin-left:4px;flex:none}</style>
<div class="g">${P.map(p=>`<participant-tile name="${p[4]}" nw="${p[5]}" nx="${p[6]}" mic="${p[7]}"><user-avatar text="${p[0]}" tw="${p[1]}" bg="${p[2]}" fg="${p[3]}" ${p[8]||''}></user-avatar></participant-tile>`).join('')}</div><div class="me"><user-avatar d="56" text="DM" tw="36" bg="#f4d8da" fg="#792f3a"></user-avatar></div>`);

def('task-bar', `<style>${BASE}:host{display:flex;height:40px;background:#28173d;color:#fff;font-size:14px}.tm{display:flex;flex-direction:column;align-items:center;font-size:11.800px;line-height:18px;padding-bottom:1px}.tm div{height:18px}</style>`+
along('x',0,[[16,16,I('win',16)],[64,16,I('tsearch',16)],[111,18,I('task',17)],[159,24,I('edge',24)],[209,22,I('folder',22)],[256,24,I('store',24)],[306,24,I('tmail',24)],[347,40,I('chrome',22),'border-bottom:2px solid #76b9ed;padding-top:2px'],[392,48,I('teams',25),'background:#5a4c6b;border-bottom:2px solid #76b9ed;padding-top:2px'],
[984,22,I('cloud',22)],[1015,27,T(27,'76°F')],[1051,43,T(43,'Cloudy')],[1111,12,I('chevT',12)],[1133,16,I('onedrive',16)],[1159,11,I('tmic',11)],[1182,15,I('batt',15)],[1208,13,I('wifi',13)],[1229,17,I('vol',17)],[1254,54,`<div class="tm"><div>${T(42,'5:08 PM')}</div><div>${T(52,'7/19/2022')}</div></div>`],[1325,16,I('note',16)],[1361,1,'','background:#6f627f']]));

def('meeting-app', `<style>:host{display:flex;flex-direction:column;width:1366px;height:768px;background:#1f1f1f}.m{display:flex;height:629px}</style><title-bar></title-bar><call-toolbar></call-toolbar><div class="m"><shared-stage></shared-stage><participant-rail></participant-rail></div><task-bar></task-bar>`);

/* Label that tracks its letters so the line takes exactly w pixels */
def('fit-text', '<style>:host{display:inline-block;white-space:nowrap;flex:none}span{display:inline-block}</style><span><slot></slot></span>', el=>{
  const s=el.shadowRoot.querySelector('span'), w=+el.getAttribute('w');
  const fixed=[...el.querySelectorAll('*')].reduce((a,e)=>a+e.textContent.length,0);
  const n=el.textContent.length-fixed, nat=s.getBoundingClientRect().width;
  s.style.letterSpacing=((w-nat)/Math.max(1,n-1))+'px';
  el.style.width=w+'px';
});
</script>
</body>
</html>
